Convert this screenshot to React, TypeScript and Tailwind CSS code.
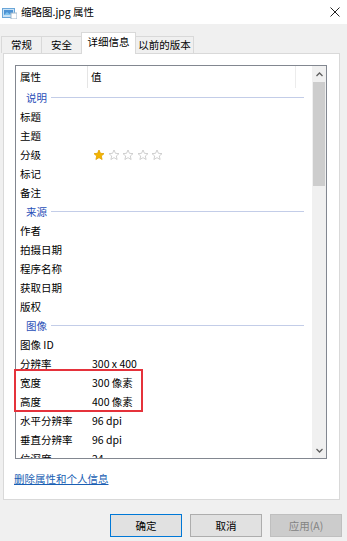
import clsx from 'clsx';

const FONT = '"Noto Sans CJK SC", "Noto Sans", sans-serif';

type Item =
  | { kind: 'section'; label: string }
  | { kind: 'row'; label: string; value?: string; stars?: boolean };

const items: Item[] = [
  { kind: 'section', label: '说明' },
  { kind: 'row', label: '标题' },
  { kind: 'row', label: '主题' },
  { kind: 'row', label: '分级', stars: true },
  { kind: 'row', label: '标记' },
  { kind: 'row', label: '备注' },
  { kind: 'section', label: '来源' },
  { kind: 'row', label: '作者' },
  { kind: 'row', label: '拍摄日期' },
  { kind: 'row', label: '程序名称' },
  { kind: 'row', label: '获取日期' },
  { kind: 'row', label: '版权' },
  { kind: 'section', label: '图像' },
  { kind: 'row', label: '图像 ID' },
  { kind: 'row', label: '分辨率', value: '300 x 400' },
  { kind: 'row', label: '宽度', value: '300 像素' },
  { kind: 'row', label: '高度', value: '400 像素' },
  { kind: 'row', label: '水平分辨率', value: '96 dpi' },
  { kind: 'row', label: '垂直分辨率', value: '96 dpi' },
  { kind: 'row', label: '位深度', value: '24' },
];

function Star({ filled }: { filled?: boolean }) {
  return (
    <svg width="12" height="12" viewBox="0 0 24 24">
      <polygon
        points="12,2 14.9,8.6 22,9.3 16.6,14 18.2,21 12,17.3 5.8,21 7.4,14 2,9.3 9.1,8.6"
        fill={filled ? '#f4b400' : 'none'}
        stroke={filled ? '#e0a000' : '#c4c4c4'}
        strokeWidth="1.6"
        strokeLinejoin="round"
      />
    </svg>
  );
}

function Tab({ label, width, active }: { label: string; width: string; active?: boolean }) {
  return (
    <div
      className={clsx(
        'flex items-center justify-center border border-b-0 -ml-px first:ml-0',
        width,
        active
          ? 'relative z-10 h-[22px] -mb-px bg-white border-[#d9d9d9] pb-[3px]'
          : 'h-[17px] bg-[#f0f0f0] border-[#d9d9d9]'
      )}
    >
      {label}
    </div>
  );
}

function Btn({ label, primary, disabled }: { label: string; primary?: boolean; disabled?: boolean }) {
  return (
    <div
      className={clsx(
        'w-[72px] h-[23px] flex items-center justify-center border',
        primary && 'bg-[#e1e1e1] border-[#0078d7]',
        !primary && !disabled && 'bg-[#e1e1e1] border-[#adadad]',
        disabled && 'bg-[#cccccc] border-[#bfbfbf] text-[#838383]'
      )}
    >
      {label}
    </div>
  );
}

export default function App() {
  return (
    <div
      className="w-[347px] h-[541px] bg-[#f0f0f0] flex flex-col overflow-hidden text-[10.5px] leading-[14px] text-black"
      style={{ fontFamily: FONT }}
    >
      {/* Title bar */}
      <div className="h-[24px] shrink-0 bg-white flex items-center pl-[2px] pr-[7px]">
        <svg width="15" height="13" viewBox="0 0 15 13" className="mr-[2px] mt-[1px]">
          <rect x="0.5" y="2.5" width="12" height="9" fill="#c9e2f6" stroke="#6aa6d8" />
          <rect x="2" y="4" width="9" height="5" fill="#4d93d4" />
          <path d="M2 9 L5 6 L7.5 8 L9 7 L11 9 Z" fill="#7fc3ef" />
          <rect x="9" y="7" width="6" height="6" fill="#ffffff" stroke="#9fb7cc" />
        </svg>
        <span className="ml-[2px]">缩略图.jpg 属性</span>
        <svg width="10" height="10" viewBox="0 0 10 10" className="ml-auto">
          <path d="M0.5 0.5 L9.5 9.5 M9.5 0.5 L0.5 9.5" stroke="#222" strokeWidth="1" />
        </svg>
      </div>

      {/* Tabs */}
      <div className="h-[29px] shrink-0 flex items-end pl-[1px]">
        <Tab label="常规" width="w-[41px]" />
        <Tab label="安全" width="w-[41px]" />
        <Tab label="详细信息" width="w-[55px]" active />
        <Tab label="以前的版本" width="w-[59px]" />
      </div>

      {/* Panel */}
      <div className="ml-[3px] w-[337px] h-[447px] shrink-0 bg-white border border-[#d9d9d9] pl-[11px] pt-[11px] flex flex-col">
        <div className="relative w-[312px] h-[394px] border border-[#828790] flex">
          <div className="flex-1 overflow-hidden">
            {/* Header */}
            <div className="h-[22px] flex items-center">
              <div className="w-[72px] h-full flex items-center pl-[4px] border-r border-[#e5e5e5]">属性</div>
              <div className="w-[208px] h-full flex items-center pl-[3px] border-r border-[#ececec]">值</div>
            </div>
            {items.map((it, i) =>
              it.kind === 'section' ? (
                <div key={i} className="h-[19px] flex items-center pl-[10px] pr-[8px]">
                  <span className="text-[#2a4fb8]">{it.label}</span>
                  <div className="flex-1 h-px bg-[#c3cde8] ml-[4px]" />
                </div>
              ) : (
                <div key={i} className="h-[19px] flex items-center">
                  <div className="w-[72px] pl-[4px] whitespace-nowrap">{it.label}</div>
                  <div className="pl-[4px] whitespace-nowrap flex items-center">
                    {it.stars ? (
                      <div className="flex gap-[2.5px] pl-[1px]">
                        <Star filled />
                        <Star />
                        <Star />
                        <Star />
                        <Star />
                      </div>
                    ) : (
                      it.value
                    )}
                  </div>
                </div>
              )
            )}
          </div>

          {/* Scrollbar */}
          <div className="w-[14px] bg-[#f0f0f0] flex flex-col">
            <div className="h-[16px] flex items-center justify-center">
              <svg width="7" height="5" viewBox="0 0 7 5">
                <path d="M0.5 4 L3.5 1 L6.5 4" stroke="#606060" strokeWidth="1.3" fill="none" />
              </svg>
            </div>
            <div className="h-[104px] bg-[#cdcdcd] mx-[1px]" />
            <div className="flex-1" />
            <div className="h-[16px] flex items-center justify-center">
              <svg width="7" height="5" viewBox="0 0 7 5">
                <path d="M0.5 1 L3.5 4 L6.5 1" stroke="#606060" strokeWidth="1.3" fill="none" />
              </svg>
            </div>
          </div>

          {/* Highlight annotation */}
          <div className="absolute left-[-2px] top-[303px] w-[129px] h-[43px] border-2 border-[#e5323b]" />
        </div>

        <div className="mt-[13px] -ml-px">
          <span className="text-[#1a5fb4] underline">删除属性和个人信息</span>
        </div>
      </div>

      {/* Buttons */}
      <div className="mt-[14px] flex justify-end gap-[8px] pr-[5px]">
        <Btn label="确定" primary />
        <Btn label="取消" />
        <Btn label="应用(A)" disabled />
      </div>
    </div>
  );
}
